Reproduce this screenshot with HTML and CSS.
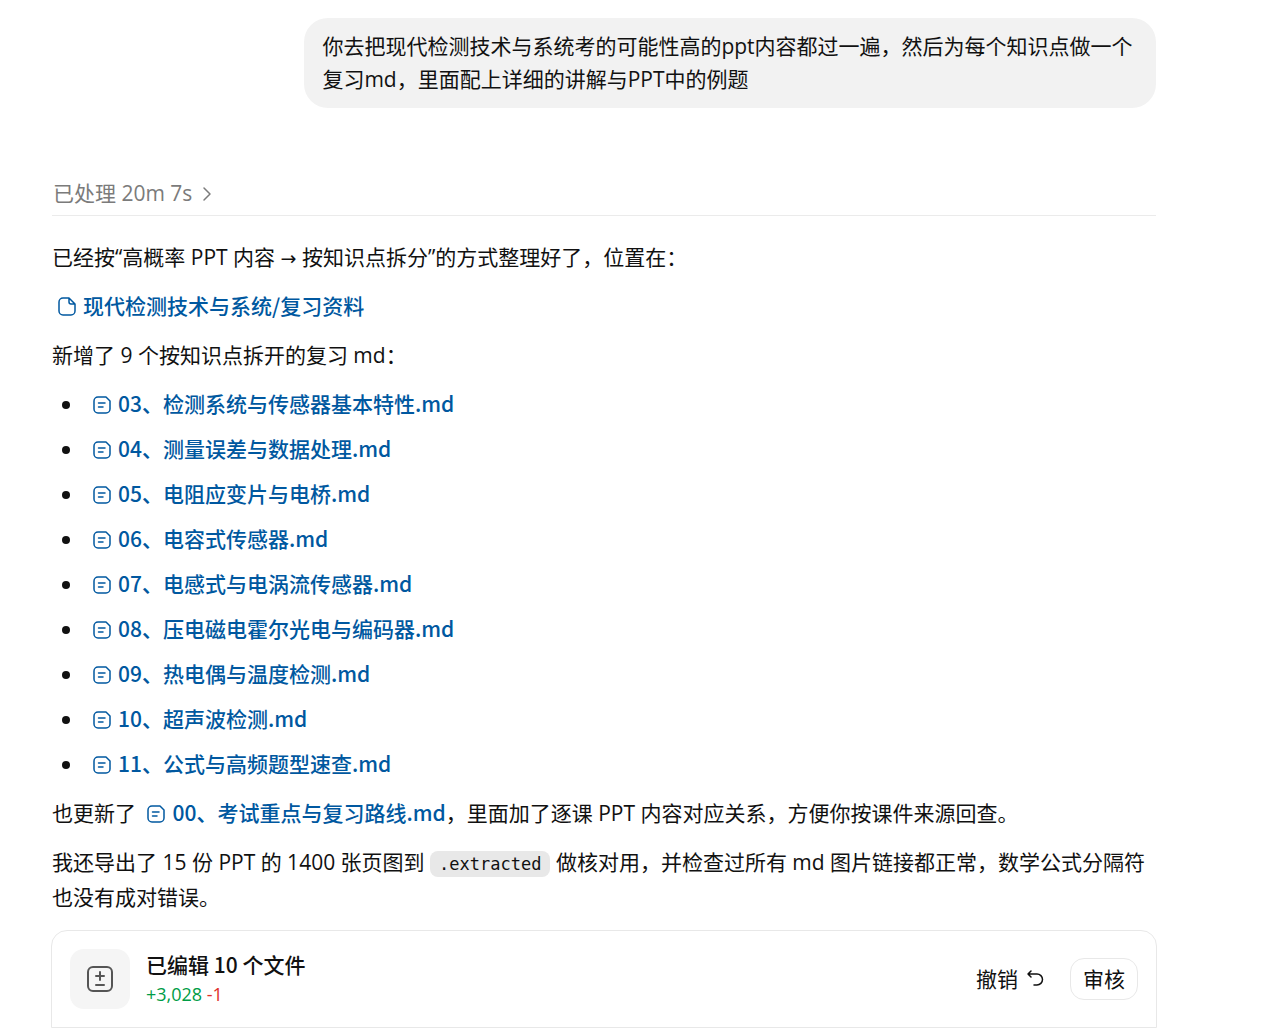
FILE: index.html
```html
<!DOCTYPE html>
<html lang="zh-CN">
<head>
    <meta charset="UTF-8">
    <meta name="viewport" content="width=device-width, initial-scale=1.0">
    <title>现代检测技术与系统</title>
    <link rel="stylesheet" href="styles.css">
</head>
<body>
    <svg class="icon-defs" aria-hidden="true">
        <symbol id="icon-page" viewBox="0 0 20 20">
            <path d="M12 1H6a4 4 0 0 0-4 4v9a4 4 0 0 0 4 4h8a4 4 0 0 0 4-4V7zM12 1v4a2 2 0 0 0 2 2h4"/>
        </symbol>
        <symbol id="icon-doc" viewBox="0 0 20 20">
            <path d="M14 2H6a4 4 0 0 0-4 4v8a4 4 0 0 0 4 4h8a4 4 0 0 0 4-4V6zM6.5 8H13M6.5 12H11"/>
        </symbol>
    </svg>
    <main class="chat">
        <div class="user-message">你去把现代检测技术与系统考的可能性高的ppt内容都过一遍，然后为每个知识点做一个复习md，里面配上详细的讲解与PPT中的例题</div>

        <div class="status">
            <button type="button" class="status-toggle">
                已处理 20m 7s
                <svg class="chevron" viewBox="0 0 10 16" aria-hidden="true"><path d="M2 2l6 6-6 6"/></svg>
            </button>
        </div>

        <article class="answer">
            <p>已经按“高概率 PPT 内容 <span class="arrow">→</span> 按知识点拆分”的方式整理好了，位置在：</p>
            <p><a href="#" class="file-link"><svg class="file-icon" aria-hidden="true"><use href="#icon-page"/></svg>现代检测技术与系统/复习资料</a></p>
            <p>新增了 9 个按知识点拆开的复习 md：</p>
            <ul class="file-list">
                <li><a href="#" class="file-link"><svg class="file-icon" aria-hidden="true"><use href="#icon-doc"/></svg>03、检测系统与传感器基本特性.md</a></li>
                <li><a href="#" class="file-link"><svg class="file-icon" aria-hidden="true"><use href="#icon-doc"/></svg>04、测量误差与数据处理.md</a></li>
                <li><a href="#" class="file-link"><svg class="file-icon" aria-hidden="true"><use href="#icon-doc"/></svg>05、电阻应变片与电桥.md</a></li>
                <li><a href="#" class="file-link"><svg class="file-icon" aria-hidden="true"><use href="#icon-doc"/></svg>06、电容式传感器.md</a></li>
                <li><a href="#" class="file-link"><svg class="file-icon" aria-hidden="true"><use href="#icon-doc"/></svg>07、电感式与电涡流传感器.md</a></li>
                <li><a href="#" class="file-link"><svg class="file-icon" aria-hidden="true"><use href="#icon-doc"/></svg>08、压电磁电霍尔光电与编码器.md</a></li>
                <li><a href="#" class="file-link"><svg class="file-icon" aria-hidden="true"><use href="#icon-doc"/></svg>09、热电偶与温度检测.md</a></li>
                <li><a href="#" class="file-link"><svg class="file-icon" aria-hidden="true"><use href="#icon-doc"/></svg>10、超声波检测.md</a></li>
                <li><a href="#" class="file-link"><svg class="file-icon" aria-hidden="true"><use href="#icon-doc"/></svg>11、公式与高频题型速查.md</a></li>
            </ul>
            <p>也更新了 <a href="#" class="file-link"><svg class="file-icon" aria-hidden="true"><use href="#icon-doc"/></svg>00、考试重点与复习路线.md</a>，里面加了逐课 PPT 内容对应关系，方便你按课件来源回查。</p>
            <p>我还导出了 15 份 PPT 的 1400 张页图到 <code>.extracted</code> 做核对用，并检查过所有 md 图片链接都正常，数学公式分隔符也没有成对错误。</p>
        </article>

        <section class="changes">
            <div class="changes-icon">
                <svg viewBox="0 0 28 28" aria-hidden="true">
                    <rect x="2" y="2" width="24" height="24" rx="5"/>
                    <path d="M14 7v8M10 11h8M10 20h8"/>
                </svg>
            </div>
            <div class="changes-info">
                <div class="changes-title">已编辑 10 个文件</div>
                <div class="changes-count"><span class="added">+3,028</span> <span class="removed">-1</span></div>
            </div>
            <button type="button" class="undo">
                撤销
                <svg viewBox="0 0 18 18" aria-hidden="true"><path d="M5 1L2 4l3 3M2 4h9a5 5 0 0 1 0 11H8"/></svg>
            </button>
            <button type="button" class="review">审核</button>
        </section>
    </main>
</body>
</html>
```
FILE: styles.css
```css
* {
    padding: 0;
    margin: 0;
    box-sizing: border-box;
}
body {
    background: #fff;
    color: #111;
    font-family: "Open Sans", "Noto Sans CJK SC", sans-serif;
    font-size: 21px;
    line-height: 35px;
}
button {
    border: none;
    background: none;
    color: inherit;
    font: inherit;
    cursor: pointer;
}
svg {
    fill: none;
    stroke: currentColor;
    stroke-linecap: round;
    stroke-linejoin: round;
}
.icon-defs {
    display: none;
}
.chat {
    display: flex;
    flex-direction: column;
    padding: 18px 110px 0 51px;
}
.user-message {
    align-self: flex-end;
    max-width: 77%;
    margin-right: 1px;
    padding: 12px 18px;
    border-radius: 24px;
    background: #f2f2f2;
    line-height: 33px;
}
.status {
    margin: 68px 1px 0;
    padding-bottom: 4px;
    border-bottom: 1px solid #ebebeb;
}
.status-toggle {
    display: flex;
    align-items: center;
    gap: 10px;
    padding-left: 1px;
    color: #7b7b7b;
}
.chevron {
    width: 10px;
    height: 16px;
    stroke-width: 1.5;
}
.answer {
    display: flex;
    flex-direction: column;
    gap: 14px;
    margin-top: 24px;
    padding-left: 1px;
}
.arrow {
    font-family: "DejaVu Sans", sans-serif;
    font-size: 19px;
    line-height: 1;
}
.file-link {
    color: #0058a0;
    font-family: "Noto Sans CJK SC", sans-serif;
    font-weight: 500;
    line-height: 1;
    text-decoration: none;
}
.file-link:hover {
    text-decoration: underline;
}
.file-icon {
    width: 20px;
    height: 20px;
    margin: 0 6px 0 5px;
    vertical-align: -3px;
    stroke-width: 1.5;
}
.file-list {
    display: flex;
    flex-direction: column;
    gap: 10px;
    padding-left: 10px;
    list-style: none;
}
.file-list li::before {
    content: "";
    display: inline-block;
    width: 8px;
    height: 8px;
    margin-right: 17px;
    border-radius: 50%;
    background: #111;
    vertical-align: 3px;
}
code {
    padding: 3px 9px;
    border-radius: 8px;
    background: #e8e8e8;
    font-family: "DejaVu Sans Mono", monospace;
    font-size: 17px;
    line-height: 1;
}
.changes {
    display: flex;
    align-items: center;
    margin-top: 15px;
    padding: 18px;
    border: 1px solid #e8e8e8;
    border-radius: 16px 16px 0 0;
}
.changes-icon {
    display: flex;
    align-items: center;
    justify-content: center;
    width: 60px;
    height: 60px;
    border-radius: 14px;
    background: #f5f5f5;
    color: #555;
}
.changes-icon svg {
    width: 28px;
    height: 28px;
    stroke-width: 2;
}
.changes-info {
    flex: 1;
    margin-left: 16px;
    line-height: 30px;
}
.changes-title {
    font-family: "Noto Sans CJK SC", sans-serif;
    font-weight: 500;
}
.changes-count {
    font-size: 18px;
}
.added {
    color: #009c46;
}
.removed {
    color: #e02e2a;
}
.undo {
    display: flex;
    align-items: center;
    gap: 8px;
    margin-right: 26px;
}
.undo svg {
    width: 18px;
    height: 18px;
    stroke-width: 1.5;
}
.review {
    height: 42px;
    padding: 0 12px;
    border: 1px solid #e8e8e8;
    border-radius: 14px;
}
```
